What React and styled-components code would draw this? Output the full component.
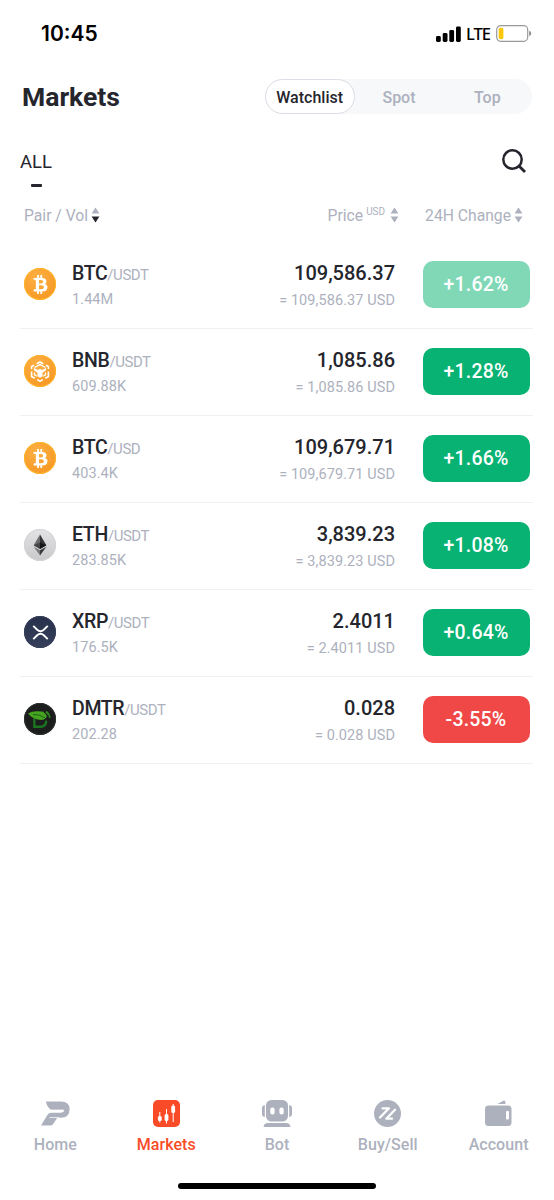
import React from "react";
import styled, { createGlobalStyle, css } from "styled-components";
import { FaBtc } from "react-icons/fa";

const GlobalStyle = createGlobalStyle`
    * {
        box-sizing: border-box;
    }
    body {
        margin: 0;
        background: #fff;
        font-family: Roboto, "Liberation Sans", sans-serif;
        color: #25262d;
    }
    button {
        font-family: inherit;
        border: 0;
        padding: 0;
        background: none;
    }
    svg {
        display: block;
        flex: none;
    }
`;

const Screen = styled.div`
    width: 554px;
    height: 1200px;
    display: flex;
    flex-direction: column;
    overflow: hidden;
    background: #fff;
`;

const StatusBar = styled.div`
    height: 67px;
    padding: 0 22px 0 41px;
    display: flex;
    align-items: center;
    justify-content: space-between;
    color: #000;
`;

const Time = styled.span`
    font-family: Inter, sans-serif;
    font-size: 21px;
    font-weight: 600;
`;

const StatusIcons = styled.div`
    display: flex;
    align-items: center;
`;

const Network = styled.span`
    font-family: "Noto Sans", sans-serif;
    font-size: 16.5px;
    line-height: 20px;
    font-weight: 500;
    letter-spacing: -1px;
    width: 24px;
    margin: 0 6px 0 5px;
`;

const Header = styled.header`
    height: 59px;
    padding: 0 22px 0 22px;
    display: flex;
    align-items: center;
    justify-content: space-between;
`;

const Title = styled.h1`
    margin: 0;
    font-size: 26.5px;
    font-weight: 700;
`;

const Segments = styled.div`
    display: flex;
    height: 35px;
    width: 267px;
    border-radius: 17.5px;
    background: #f7f8fa;
`;

const Segment = styled.button`
    flex: 1;
    height: 35px;
    padding-right: 1px;
    border-radius: 17.5px;
    font-size: 16px;
    line-height: 37px;
    font-weight: 500;
    color: #adb1be;
    ${props => props.$active && css`
        line-height: 35px;
        color: #25262d;
        background: #fff;
        border: 1.5px solid #dcdde6;
    `}
`;

const Filters = styled.div`
    height: 66px;
    padding: 23px 28px 0 20px;
    display: flex;
    justify-content: space-between;
`;

const Tab = styled.div`
    width: 33px;
    font-size: 18.5px;
    line-height: 27px;
    &::after {
        content: "";
        display: block;
        width: 11px;
        height: 3px;
        margin: 8px 0 0 11px;
        border-radius: 1px;
        background: #25262d;
    }
`;

const Columns = styled.div`
    height: 50px;
    padding: 11px 31px 0 24px;
    display: flex;
    font-size: 15.7px;
    line-height: 25px;
    color: #adb1be;
`;

const Column = styled.div`
    display: flex;
    height: 24px;
    align-items: center;
    gap: ${props => props.$gap || 3}px;
    margin-left: ${props => (props.$push ? "auto" : 0)};
    margin-right: ${props => props.$after || 0}px;
`;

const Unit = styled.span`
    font-size: 10px;
    line-height: 12px;
    align-self: flex-start;
    margin: 3px 0 0 -2px;
`;

const List = styled.div`
    flex: 1;
    padding: 0 21px 0 20px;
`;

const Row = styled.div`
    height: 87px;
    padding: 0 3px 0 4px;
    display: flex;
    border-bottom: 1px solid #f0f1f3;
`;

const Coin = styled.div`
    width: 32px;
    height: 32px;
    margin: 26.4px 16px 0 0;
`;

const CoinDisc = styled.div`
    width: 32px;
    height: 32px;
    border-radius: 50%;
    display: flex;
    align-items: center;
    justify-content: center;
    color: #fff;
    background: ${props => props.$fill};
    box-shadow: inset 0 0 0 1px ${props => props.$rim};
`;

const Pair = styled.div`
    flex: 1;
    padding-top: 19px;
`;

const PairName = styled.div`
    font-size: 19.5px;
    line-height: 25px;
    font-weight: 500;
    letter-spacing: -0.35px;
    white-space: nowrap;
`;

const Quote = styled.span`
    font-size: 15px;
    font-weight: 400;
    letter-spacing: -0.45px;
    color: #adb1be;
`;

const Muted = styled.div`
    font-size: 14.5px;
    line-height: 20px;
    margin-top: ${props => props.$top}px;
    letter-spacing: 0.08px;
    color: #adb1be;
`;

const Prices = styled.div`
    padding-top: 19px;
    margin-right: 28px;
    text-align: right;
`;

const Price = styled.div`
    font-size: 20px;
    line-height: 25px;
    font-weight: 500;
`;

const Change = styled.div`
    width: 107px;
    height: 47px;
    margin-top: 19px;
    border-radius: 10px;
    font-size: 19.5px;
    line-height: 48px;
    font-weight: 500;
    letter-spacing: 0.2px;
    padding-right: 1px;
    text-align: center;
    color: #fff;
    background: ${props => (props.$down ? "#f04747" : props.$faded ? "#81d8b7" : "#08b272")};
`;

const NavBar = styled.nav`
    height: 83px;
    display: flex;
`;

const NavItem = styled.button`
    flex: 1;
    display: flex;
    flex-direction: column;
    align-items: center;
    font-size: 16px;
    line-height: 20px;
    font-weight: 500;
    letter-spacing: 0.05px;
    color: ${props => (props.$active ? "#fa4b28" : "#adb1be")};
    svg {
        margin-bottom: 8px;
    }
`;

const HomeIndicator = styled.div`
    width: 198px;
    height: 6px;
    margin: 0 auto 11px 178px;
    border-radius: 3px;
    background: #000;
`;

const SortIcon = ({ down }) => (
    <svg width="9" height="16" viewBox="0 0 9 16" fill="#adb1be">
        <path d="M4.5 0.5L8.4 6.5H0.6z" />
        <path d="M4.5 15.5L0.6 9.5H8.4z" fill={down ? "#25262d" : "#adb1be"} />
    </svg>
);

const SignalIcon = () => (
    <svg width="25" height="16" viewBox="0 0 25 16">
        <rect x="0" y="10" width="4.8" height="6" rx="1.4" />
        <rect x="6.7" y="7" width="4.8" height="9" rx="1.4" />
        <rect x="13.3" y="4" width="4.8" height="12" rx="1.4" />
        <rect x="20" y="0.5" width="4.8" height="15.5" rx="1.4" />
    </svg>
);

const BatteryIcon = () => (
    <svg width="36" height="17" viewBox="0 0 36 17">
        <rect x="0.7" y="0.7" width="31" height="15.6" rx="4" fill="none" stroke="#999" strokeWidth="1.2" />
        <rect x="2.7" y="2.8" width="4.7" height="11.4" rx="1.8" fill="#fdc70b" />
        <path d="M33.2 5.8q2 .8 2 2.7t-2 2.7z" fill="#888" />
    </svg>
);

const SearchIcon = () => (
    <svg width="24" height="24" viewBox="0 0 24 24" fill="none" stroke="#25262d" strokeWidth="2.5">
        <circle cx="10.5" cy="10.5" r="9.2" />
        <path d="M17 17l6 6" strokeWidth="2.8" />
    </svg>
);

const BnbMark = () => (
    <svg width="20" height="21" viewBox="0 0 20 21" fill="none" stroke="#fff" strokeWidth="1.6">
        <path d="M6.8 2.7L10 1l3.2 1.7M1.6 8V5.6l2.3-1.3M16.1 4.3l2.3 1.3V8M1.6 10.5v5l3.2 1.8M18.4 10.5v5l-3.2 1.800M7.200 18.600L10 20.100l2.800-1.500" />
        <path d="M4.500 6.500L10 3.600l5.500 2.900" strokeWidth="1.300" />
        <path d="M4.500 11.500v2.300l2.700 1.500M15.500 11.500v2.300l-2.700 1.500" strokeWidth="1.300" />
        <path d="M4 7l4.100 1.900L10 7.800l1.900 1.100L16 7v2.500l-3.500 2v3.800L10 16.700l-2.500-1.400v-3.800L4 9.500z" fill="#fff" stroke="none" />
    </svg>
);

const EthMark = () => (
    <svg width="14" height="22" viewBox="0 0 15 23">
        <path d="M7.5.3L.7 11.8l6.8 3.9z" fill="#6b6b6c" />
        <path d="M7.5.3l6.8 11.5-6.8 3.9z" fill="#333436" />
        <path d="M.7 11.8l6.8-3v6.9z" fill="#434446" />
        <path d="M14.3 11.8l-6.8-3v6.9z" fill="#161719" />
        <path d="M.7 13.3l6.8 3.9v5.5z" fill="#77787a" />
        <path d="M14.3 13.3l-6.8 3.9v5.5z" fill="#393a3c" />
    </svg>
);

const XrpMark = () => (
    <svg width="17" height="15" viewBox="0 0 18 16" preserveAspectRatio="none" fill="none" stroke="#fff" strokeWidth="2">
        <path d="M1.3 1l4.2 4.1q3.5 3.1 7 0L16.7 1M1.3 15l4.2-4.1q3.5-3.1 7 0l4.2 4.1" />
    </svg>
);

const DmtrMark = () => (
    <svg width="24" height="21" viewBox="0 0 24 21">
        <path d="M6.3 9.500v8.200h7q4.500-.3 5-6" fill="none" stroke="#1a7420" strokeWidth="2.400" />
        <path d="M0 4.500Q4 2.200 9 2.300q7-.3 10.500 2.400-.5 6-6 6.300Q5 11 0 4.500z" fill="#45a51e" />
        <path d="M16 3q4 2.500 4.500 8.500" fill="none" stroke="#1c1d1d" strokeWidth="1.100" />
        <path d="M18 2.500q3.300 2 3.800 6.500" fill="none" stroke="#2f8b20" strokeWidth="1.500" />
        <path d="M5 5.500q7-.5 12 3.500" fill="none" stroke="#1b5519" strokeWidth=".9" />
    </svg>
);

const HomeIcon = () => (
    <svg width="29" height="27" viewBox="0 0 29 27" fill="currentColor">
        <path d="M4.800 1.500H20q8.600 0 8.600 7.500 0 8.700-8.900 8.700h-3.400L12 24.200q-.9 1.400-2.600 1.400H0L6.400 15q1.300-2.200 4-2.200h9.200q3 0 3.700-2.800H11Q6.500 8.500 4.800 1.500z" />
        <path d="M10.500 10.300h12" fill="none" stroke="#fff" strokeWidth="1.300" />
        <path d="M8.500 17.500h10" fill="none" stroke="#fff" strokeWidth=".7" />
    </svg>
);

const MarketsIcon = () => (
    <svg width="27" height="27" viewBox="0 0 27 27" fill="currentColor">
        <rect width="27" height="27" rx="5" />
        <path d="M6.8 12v10.500M13.500 9v14.500M20.200 4v18" stroke="#fff" strokeWidth="1" />
        <rect x="4.900" y="16" width="3.800" height="5" rx="1.500" fill="#fff" />
        <rect x="11.600" y="14" width="3.800" height="7" rx="1.500" fill="#fff" />
        <rect x="18.300" y="5.500" width="3.800" height="7.500" rx="1.500" fill="#fff" />
    </svg>
);

const BotIcon = () => (
    <svg width="30" height="27" viewBox="0 0 30 27" fill="currentColor">
        <rect x="4" y="0" width="22" height="21.500" rx="5.500" />
        <path d="M2.800 5v12Q0 16.500 0 14V8q0-2.500 2.800-3zM27.200 5v12q2.800-.5 2.800-3V8q0-2.500-2.800-3z" />
        <path d="M1.500 27q.5-4 4.500-4h18q4 0 4.500 4z" />
        <rect x="8.300" y="7.500" width="4.300" height="7" rx="2" fill="#fff" />
        <rect x="17.400" y="7.500" width="4.300" height="7" rx="2" fill="#fff" />
    </svg>
);

const TradeIcon = () => (
    <svg width="27" height="27" viewBox="0 0 27 27" fill="none">
        <circle cx="13.500" cy="13.500" r="13.500" fill="currentColor" />
        <path d="M8.500 8.300H15L6 17.500M21 9.800l-8.700 8.900H18" stroke="#fff" strokeWidth="2.300" strokeLinecap="round" strokeLinejoin="round" />
    </svg>
);

const AccountIcon = () => (
    <svg width="27" height="27" viewBox="0 0 27 27" fill="currentColor">
        <path d="M12.500 4L18.300.700q1.300-.7 1.700.6l.6 2.700z" />
        <rect x="0" y="5.500" width="26.500" height="20.500" rx="3.500" />
        <rect x="21" y="11" width="3" height="8.500" rx="1" fill="#fff" />
    </svg>
);

const coins = {
    BTC: { fill: "radial-gradient(circle at 40% 30%, #fdb044, #f4921c)", rim: "#ffb52b", mark: <FaBtc size={19} /> },
    BNB: { fill: "radial-gradient(circle at 40% 30%, #fdb044, #f4921c)", rim: "#ffb52b", mark: <BnbMark /> },
    ETH: { fill: "linear-gradient(#e3e3e5, #c9c9cb)", rim: "#d4d4d6", mark: <EthMark /> },
    XRP: { fill: "linear-gradient(#27304a, #36405a)", rim: "#37415a", mark: <XrpMark /> },
    DMTR: { fill: "#1c1d1d", rim: "#303131", mark: <DmtrMark /> }
};

const pairs = [
    { base: "BTC", quote: "USDT", volume: "1.44M", price: "109,586.37", change: "+1.62%", faded: true },
    { base: "BNB", quote: "USDT", volume: "609.88K", price: "1,085.86", change: "+1.28%" },
    { base: "BTC", quote: "USD", volume: "403.4K", price: "109,679.71", change: "+1.66%" },
    { base: "ETH", quote: "USDT", volume: "283.85K", price: "3,839.23", change: "+1.08%" },
    { base: "XRP", quote: "USDT", volume: "176.5K", price: "2.4011", change: "+0.64%" },
    { base: "DMTR", quote: "USDT", volume: "202.28", price: "0.028", change: "-3.55%" }
];

const navItems = [
    { label: "Home", icon: <HomeIcon /> },
    { label: "Markets", icon: <MarketsIcon />, active: true },
    { label: "Bot", icon: <BotIcon /> },
    { label: "Buy/Sell", icon: <TradeIcon /> },
    { label: "Account", icon: <AccountIcon /> }
];

const MarketRow = ({ base, quote, volume, price, change, faded }) => (
    <Row>
        <Coin>
            <CoinDisc $fill={coins[base].fill} $rim={coins[base].rim}>
                {coins[base].mark}
            </CoinDisc>
        </Coin>
        <Pair>
            <PairName>
                {base}<Quote>/{quote}</Quote>
            </PairName>
            <Muted $top={2}>{volume}</Muted>
        </Pair>
        <Prices>
            <Price>{price}</Price>
            <Muted $top={5}>= {price} USD</Muted>
        </Prices>
        <Change $faded={faded} $down={change.startsWith("-")}>{change}</Change>
    </Row>
);

const App = () => (
    <>
        <GlobalStyle />
        <Screen>
            <StatusBar>
                <Time>10:45</Time>
                <StatusIcons>
                    <SignalIcon />
                    <Network>LTE</Network>
                    <BatteryIcon />
                </StatusIcons>
            </StatusBar>
            <Header>
                <Title>Markets</Title>
                <Segments>
                    <Segment $active>Watchlist</Segment>
                    <Segment>Spot</Segment>
                    <Segment>Top</Segment>
                </Segments>
            </Header>
            <Filters>
                <Tab>ALL</Tab>
                <SearchIcon />
            </Filters>
            <Columns>
                <Column>
                    Pair / Vol <SortIcon down />
                </Column>
                <Column $push $gap={5} $after={26}>
                    Price <Unit>USD</Unit> <SortIcon />
                </Column>
                <Column>
                    24H Change <SortIcon />
                </Column>
            </Columns>
            <List>
                {pairs.map((pair, index) => (
                    <MarketRow key={index} {...pair} />
                ))}
            </List>
            <NavBar>
                {navItems.map(item => (
                    <NavItem key={item.label} $active={item.active}>
                        {item.icon}
                        {item.label}
                    </NavItem>
                ))}
            </NavBar>
            <HomeIndicator />
        </Screen>
    </>
);

export default App;
